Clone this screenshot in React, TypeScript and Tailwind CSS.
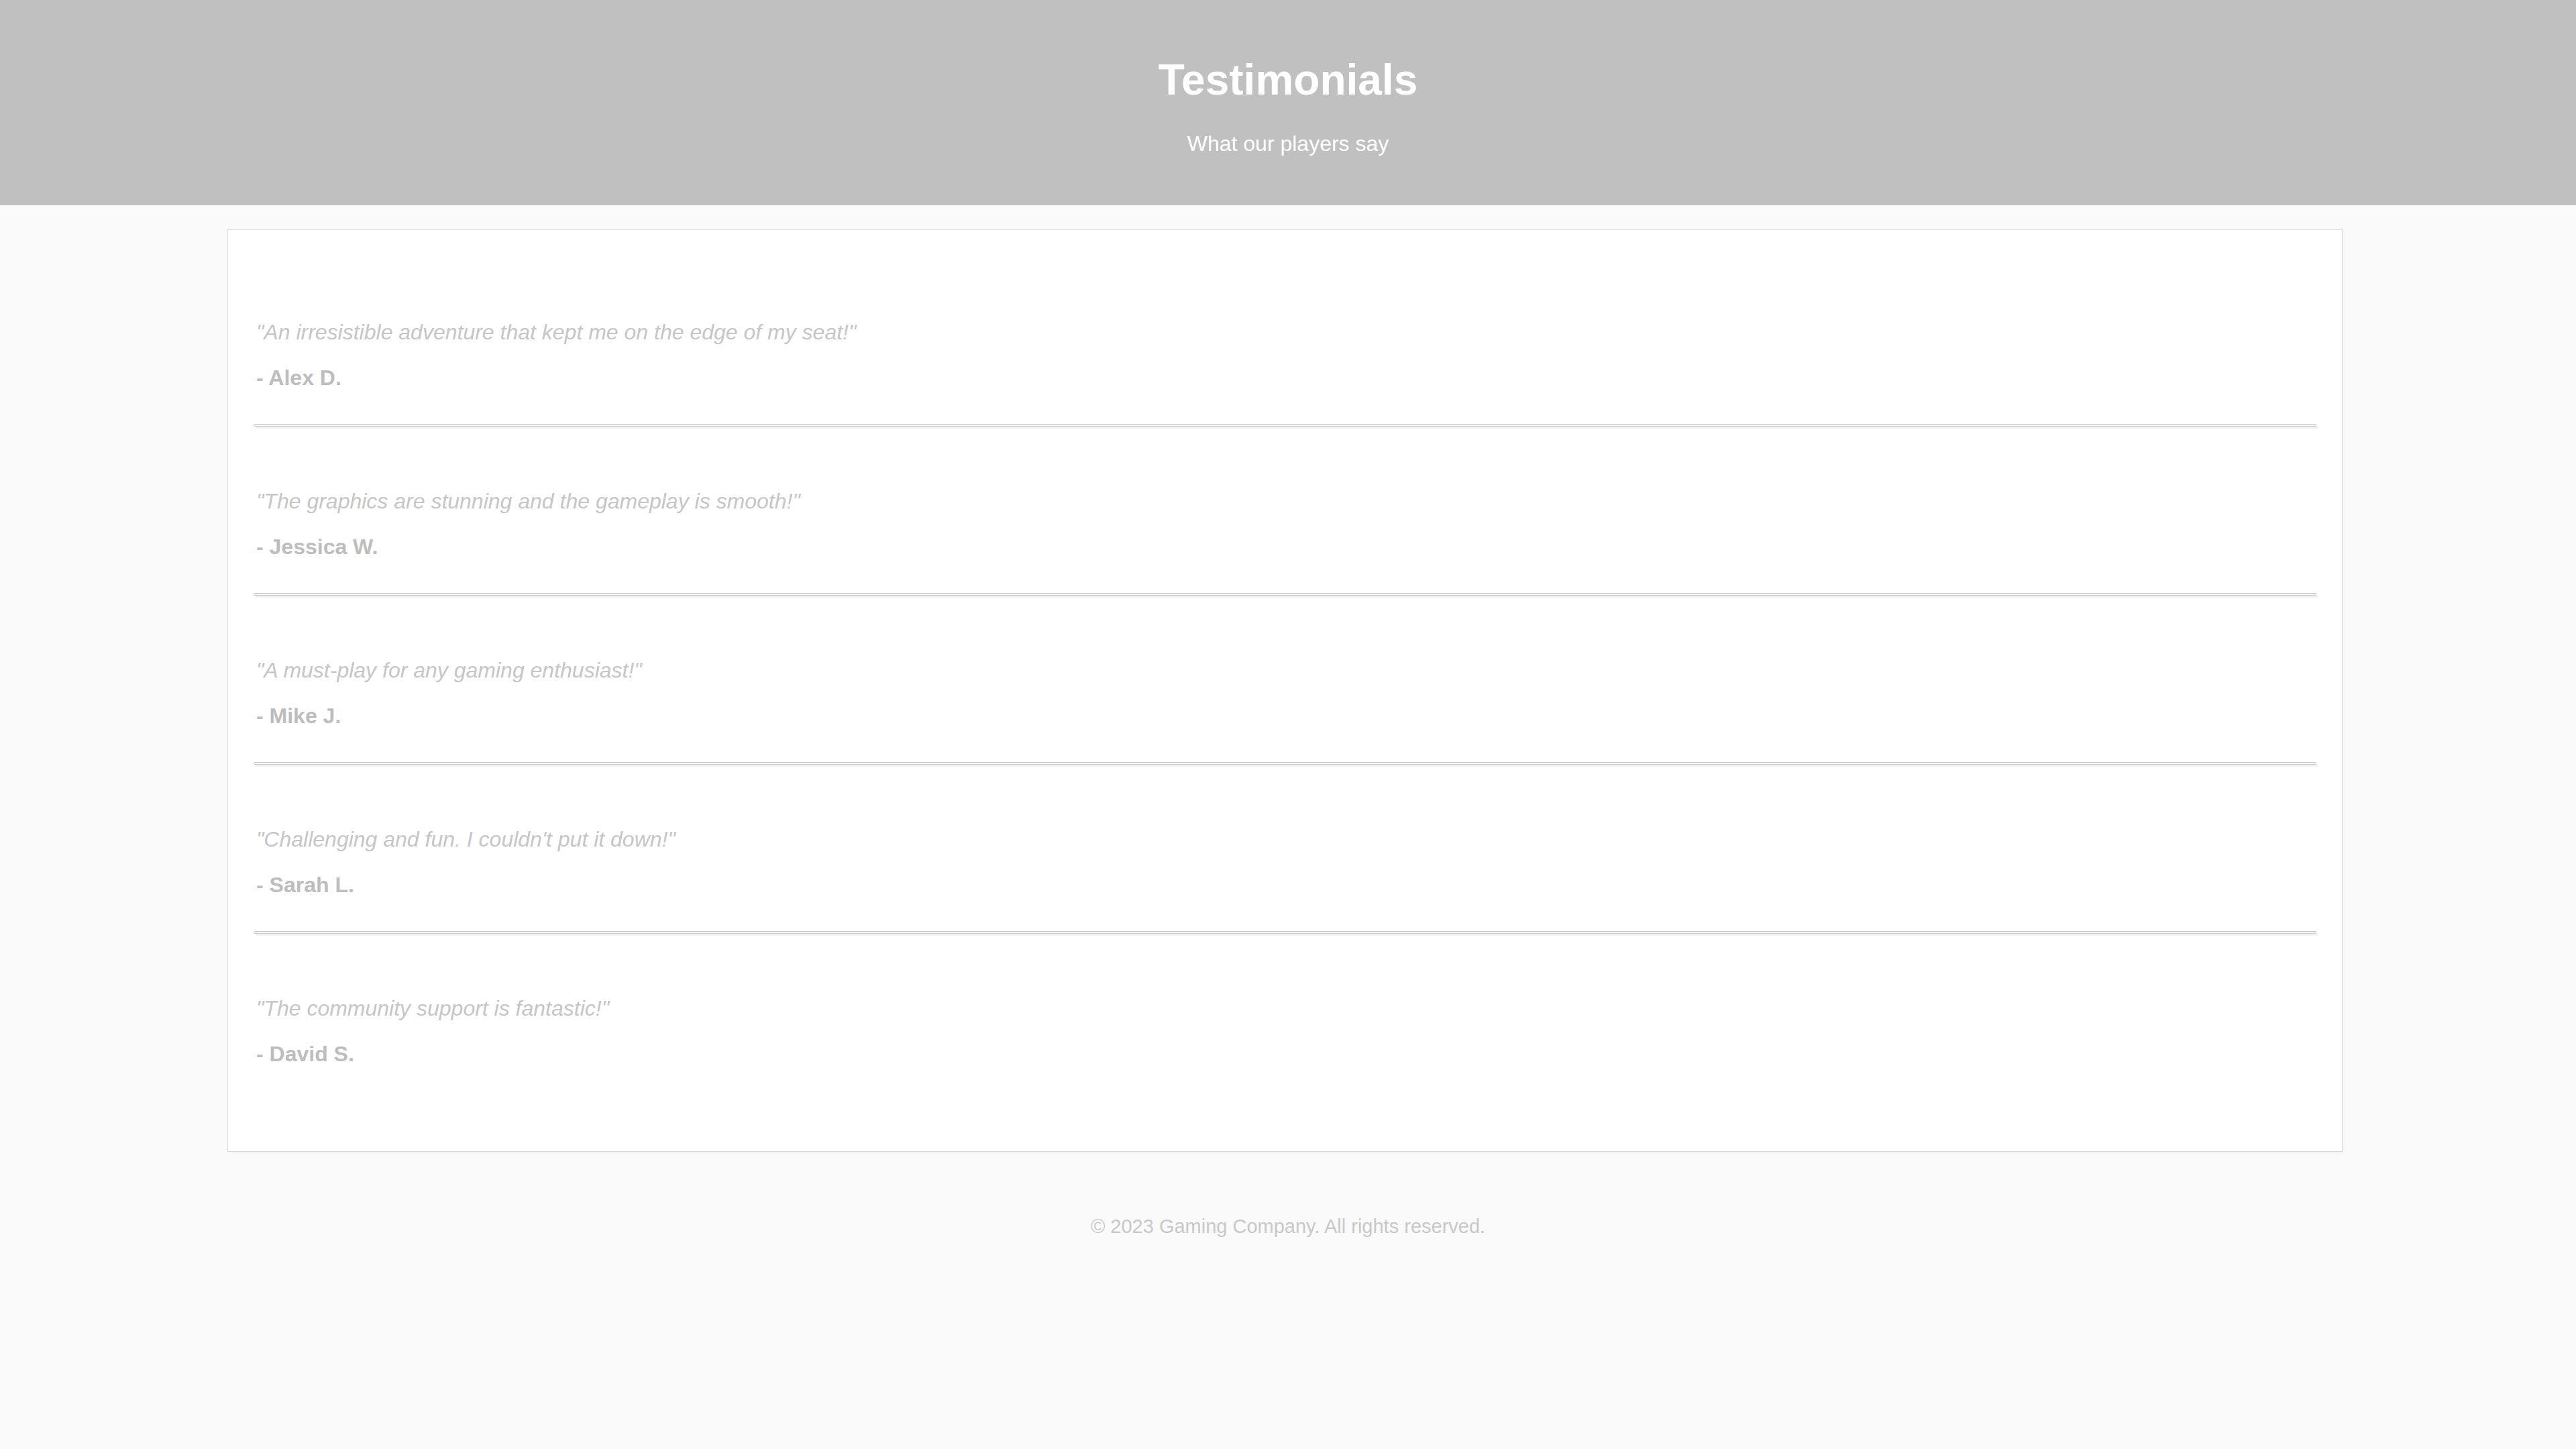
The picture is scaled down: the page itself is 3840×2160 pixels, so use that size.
import React from "react";

const items = [
  { q: "\"An irresistible adventure that kept me on the edge of my seat!\"", a: "- Alex D." },
  { q: "\"The graphics are stunning and the gameplay is smooth!\"", a: "- Jessica W." },
  { q: "\"A must-play for any gaming enthusiast!\"", a: "- Mike J." },
  { q: "\"Challenging and fun. I couldn't put it down!\"", a: "- Sarah L." },
  { q: "\"The community support is fantastic!\"", a: "- David S." },
];

export default function App() {
  return (
    <div className="min-h-[2160px] w-[3840px] bg-[#fafafa] font-['Liberation_Sans',Arial,sans-serif]">
      <header className="h-[306px] bg-[#c0c0c0] flex flex-col items-center pt-[83px] text-white">
        <h1 className="text-[64px] leading-[73px] font-bold">Testimonials</h1>
        <p className="text-[32px] leading-[37px] mt-[40px]">What our players say</p>
      </header>
      <div className="ml-[339px] mt-[36px] w-[3153px] bg-white border border-[#d9d9d9] shadow-[2px_3px_4px_rgba(0,0,0,0.03)] px-[38px] pt-[134px] pb-[126px]">
        {items.map((it, i) => (
          <div key={i}>
            <div className={i === 0 ? "" : "pt-[93px]"}>
              <p className="pl-[4px] text-[32px] leading-[37px] italic text-[#c6c6c6]">{it.q}</p>
              <p className="pl-[4px] mt-[31px] text-[32px] leading-[37px] font-bold text-[#bdbdbd]">{it.a}</p>
            </div>
            {i < items.length - 1 && (
              <div className="mt-[50px] h-[4px] rounded-full border border-[#c8c8c8] shadow-[3px_3px_0_0_#f3f3f3]" />
            )}
          </div>
        ))}
      </div>
      <footer className="pt-[95px] text-center">
        <p className="text-[29px] leading-[33px] text-[#c8c8c8]">© 2023 Gaming Company. All rights reserved.</p>
      </footer>
    </div>
  );
}
